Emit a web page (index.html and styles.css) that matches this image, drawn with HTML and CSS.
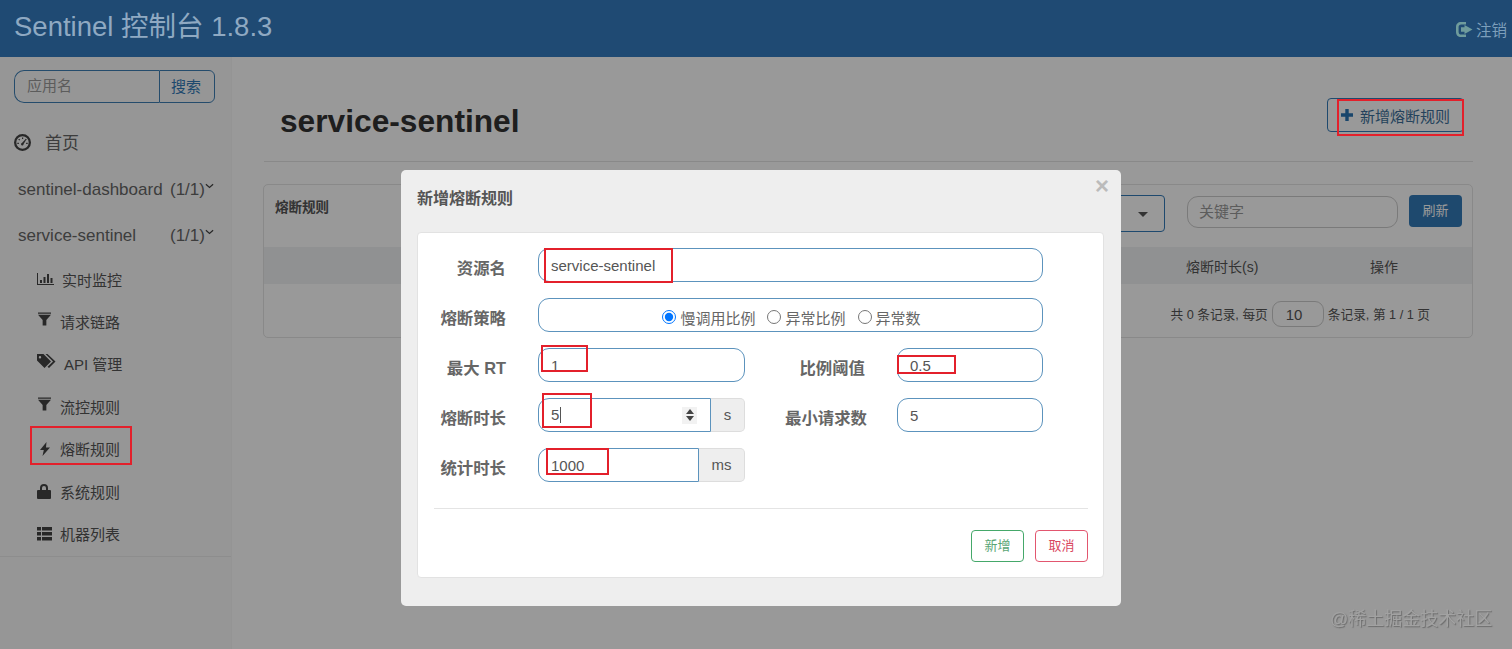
FILE: index.html
```html
<!DOCTYPE html>
<html lang="zh">
<head>
<meta charset="utf-8">
<title>Sentinel 控制台</title>
<link rel="stylesheet" href="styles.css">
</head>
<body>
<svg class="defs" width="0" height="0" aria-hidden="true">
  <symbol id="i-filter" viewBox="0 0 14 14"><path d="M0 0h14v1.4H0zM0 2.4h14L9 8v6H5V8z"/></symbol>
</svg>
<header class="topbar">
  <div class="brand">Sentinel 控制台 1.8.3</div>
  <div class="logout">
    <svg class="i-logout" viewBox="0 0 17 15"><path d="M5 0h5v2.4H5.2C3.6 2.4 2.6 3.4 2.6 5v5c0 1.600 1 2.600 2.600 2.600H10V15H5c-3 0-5-2-5-5V5c0-3 2-5 5-5z"/><path d="M8.500 5.200V3L16.500 7.500 8.500 12V9.800H5V5.200z"/></svg>
    <span>注销</span>
  </div>
</header>
<div class="layout">
  <aside class="sidebar">
    <div class="search">
      <span class="search-input">应用名</span>
      <span class="search-btn">搜索</span>
    </div>
    <div class="nav-home">
      <svg class="i-gauge" viewBox="0 0 17 17"><path fill-rule="evenodd" d="M8.500 0a8.500 8.500 0 1 1 0 17 8.500 8.500 0 0 1 0-17zm0 2.300a6.200 6.200 0 1 0 0 12.400 6.200 6.200 0 0 0 0-12.400z"/><path d="M8 3.500h1.200v1.500H8zM4.200 5.500l1-.8 1 1-.9.800zM12.800 5.500l-1-.8-1 1 .9.800zM3.300 8.800h1.600V10H3.300zM12.100 8.800h1.600V10h-1.600zM11 5.800l.8.600-2.200 3.600a1.300 1.300 0 1 1-1.700-1.100z"/></svg>
      <span>首页</span>
    </div>
    <div class="nav-app"><span class="app-name">sentinel-dashboard</span><span class="app-count">(1/1)</span><svg class="i-chev" viewBox="0 0 10 6"><path d="M1 1l4 3.500L9 1" /></svg></div>
    <div class="nav-app"><span class="app-name">service-sentinel</span><span class="app-count">(1/1)</span><svg class="i-chev" viewBox="0 0 10 6"><path d="M1 1l4 3.500L9 1" /></svg></div>
    <ul class="subnav">
      <li><svg class="ico ico-stats" viewBox="0 0 17 12"><path d="M0 0h1v11h16v1H0z"/><path d="M3 7h2v3H3zM6.500 4h2v6h-2zM10 1h2v9h-2zM13.500 5h2v5h-2z"/></svg><span class="lbl lbl-62">实时监控</span></li>
      <li><svg class="ico ico-filter"><use href="#i-filter"/></svg><span class="lbl">请求链路</span></li>
      <li><svg class="ico ico-tags" viewBox="0 0 19 15"><path d="M0 0h6.500L14 7.500 7.500 14 0 6.500zM3 2a1.200 1.200 0 1 0 0 2.400A1.200 1.200 0 0 0 3 2z" fill-rule="evenodd"/><path d="M8.500 0h2L18.500 7.500 12 14l-1.500-1.200 5.500-5.300z"/></svg><span class="lbl lbl-64">API 管理</span></li>
      <li><svg class="ico ico-filter"><use href="#i-filter"/></svg><span class="lbl">流控规则</span></li>
      <li><svg class="ico ico-flash" viewBox="0 0 10 14"><path d="M6.500 0L0 8h3.800L2.500 14 10 5.500H6z"/></svg><span class="lbl">熔断规则</span></li>
      <li><svg class="ico ico-lock" viewBox="0 0 14 15"><path fill-rule="evenodd" d="M3 6V4a4 4 0 0 1 8 0v2h2a1 1 0 0 1 1 1v7a1 1 0 0 1-1 1H1a1 1 0 0 1-1-1V7a1 1 0 0 1 1-1zm2-2v2h4V4a2 2 0 0 0-4 0z"/></svg><span class="lbl">系统规则</span></li>
      <li><svg class="ico ico-list" viewBox="0 0 15 14"><path d="M0 0h4v3.600H0zM5 0h10v3.600H5zM0 5h4v3.600H0zM5 5h10v3.600H5zM0 10h4v3.600H0zM5 10h10v3.600H5z"/></svg><span class="lbl">机器列表</span></li>
    </ul>
  </aside>
  <main class="content">
    <div class="page-head">
      <h1 class="page-title">service-sentinel</h1>
      <div class="add-btn">
        <svg class="i-plus" viewBox="0 0 12 12"><path d="M4.300 0h3.400v4.300H12v3.400H7.700V12H4.300V7.700H0V4.300h4.300z"/></svg>
        <span>新增熔断规则</span>
      </div>
    </div>
    <section class="panel">
      <div class="toolbar">
        <div class="panel-title">熔断规则</div>
        <div class="select"><i class="caret"></i></div>
        <div class="keyword">关键字</div>
        <div class="refresh">刷新</div>
      </div>
      <div class="thead"><span class="th-time">熔断时长(s)</span><span class="th-op">操作</span></div>
      <div class="pager"><span>共 0 条记录, 每页</span><span class="page-size">10</span><span>条记录, 第 1 / 1 页</span></div>
    </section>
  </main>
</div>

<div class="overlay">
  <div class="modal">
    <div class="modal-head">
      <span class="modal-title">新增熔断规则</span>
      <span class="modal-close">×</span>
    </div>
    <div class="modal-body">
      <div class="row">
        <label class="lab">资源名</label>
        <div class="field field-full">service-sentinel</div>
      </div>
      <div class="row">
        <label class="lab">熔断策略</label>
        <div class="field field-full field-radio">
          <label class="radio"><input type="radio" name="s" checked>慢调用比例</label>
          <label class="radio"><input type="radio" name="s">异常比例</label>
          <label class="radio"><input type="radio" name="s">异常数</label>
        </div>
      </div>
      <div class="row">
        <label class="lab">最大 RT</label>
        <div class="field field-half">1</div>
        <label class="lab lab2 lab2-short">比例阈值</label>
        <div class="field field-small">0.5</div>
      </div>
      <div class="row">
        <label class="lab">熔断时长</label>
        <div class="group">
          <div class="field field-grouped"><span class="caret-text">5</span>
            <span class="spin"><i class="up"></i><i class="down"></i></span>
          </div>
          <span class="addon addon-s">s</span>
        </div>
        <label class="lab lab2">最小请求数</label>
        <div class="field field-small">5</div>
      </div>
      <div class="row">
        <label class="lab">统计时长</label>
        <div class="group">
          <div class="field field-grouped">1000</div>
          <span class="addon addon-ms">ms</span>
        </div>
      </div>
      <hr class="divider">
      <div class="actions">
        <span class="btn btn-ok">新增</span>
        <span class="btn btn-cancel">取消</span>
      </div>
    </div>
  </div>
</div>

<div class="mark mark-add"></div>
<div class="mark mark-nav"></div>
<div class="mark mark-res"></div>
<div class="mark mark-rt"></div>
<div class="mark mark-ratio"></div>
<div class="mark mark-time"></div>
<div class="mark mark-stat"></div>
<div class="watermark">@稀土掘金技术社区</div>
</body>
</html>
```
FILE: styles.css
```css
* { box-sizing: border-box; }
html, body { margin: 0; height: 649px; overflow: hidden; }
body {
  font-family: "Liberation Sans", "Noto Sans CJK SC", sans-serif;
  font-size: 14px;
  color: #555;
  background: #fff;
}
.defs { position: absolute; }

/* top bar: sits above the dimming layer, in its dimmed colours */
.topbar {
  position: relative;
  z-index: 1;
  height: 57px;
  background: #1f4a73;
  display: flex;
  align-items: center;
  justify-content: space-between;
  padding: 0 5px 4px 14px;
}
.brand { font-size: 27.5px; color: #8fa9c2; line-height: 1; }
.logout { display: flex; align-items: center; gap: 3px; color: #7d9fbb; font-size: 15.5px; padding-top: 5px; }
.i-logout { width: 17px; height: 15px; fill: #6f9c9c; }

.layout { display: flex; height: 592px; }

/* sidebar */
.sidebar { width: 232px; flex: none; background: #fbfbfb; padding-top: 13px; border-right: 1px solid #f7f7f7; }
.search { display: flex; margin-left: 14px; width: 201px; height: 33px; }
.search-input {
  width: 145px; border: 1px solid #3f7fb5; border-right: 0;
  border-radius: 10px 0 0 10px; padding: 0 0 0 12px;
  line-height: 30px; color: #999; font-size: 15px;
}
.search-btn {
  width: 56px; border: 1px solid #3f7fb5; border-radius: 0 6px 6px 0;
  text-align: center; line-height: 32px; color: #337ab7; font-size: 15px; padding-right: 2px;
}
.nav-home { display: flex; align-items: center; height: 46px; margin-top: 17px; padding-left: 14px; font-size: 17px; color: #666; }
.nav-home span { margin: -4px 0 0 14px; }
.i-gauge { width: 17px; height: 17px; fill: #444; margin-top: -2px; }
.nav-app { display: flex; align-items: center; height: 46px; padding: 1px 0 0 18px; font-size: 17px; color: #666; }
.app-name { width: 152px; }
.app-count { width: 35px; }
.i-chev { width: 9px; height: 6px; fill: none; stroke: #444; stroke-width: 1.4; margin-top: -8px; }
.subnav { list-style: none; margin: 0; padding: 0 0 1px 37px; border-bottom: 1px solid #ececec; width: 231px; }
.subnav li { display: flex; align-items: center; height: 42.4px; font-size: 15px; color: #555; }
.ico { fill: #444; flex: none; }
.lbl { margin-left: 9px; }
.ico-stats { width: 17px; height: 12px; }
.lbl-62 { margin-left: 8px; }
.ico-filter { width: 13px; height: 14px; margin: -5px 1px 0 1px; }
.ico-filter + .lbl { margin-left: 8px; }
.ico-tags { width: 19px; height: 15px; margin-top: -4px; }
.lbl-64 { margin-left: 8px; }
.ico-flash { width: 10px; height: 14px; margin-left: 3px; }
.ico-flash + .lbl { margin-left: 10px; }
.ico-lock { width: 14px; height: 15px; }
.ico-lock + .lbl { margin-left: 9px; }
.ico-list { width: 15px; height: 14px; }
.ico-list + .lbl { margin-left: 8px; }

/* main */
.content { flex: 1; min-width: 0; padding: 41px 39px 0 32px; }
.page-head {
  height: 64px; border-bottom: 1px solid #e4e4e4;
  display: flex; justify-content: space-between; align-items: flex-start;
  padding: 0 9px 0 16px;
}
.page-title { margin: 4px 0 0; font-size: 31.7px; line-height: 38px; font-weight: 700; color: #333; }
.add-btn {
  width: 137px; height: 34px; border: 1px solid #337ab7; border-radius: 4px;
  display: flex; align-items: center; padding-left: 13px; gap: 7px; color: #337ab7; font-size: 15px;
}
.add-btn span { color: #3d6f9a; }
.i-plus { width: 12px; height: 12px; fill: #2a75b5; }
.panel { margin: 22px 0 0 -1px; height: 154px; border: 1px solid #e4e4e4; border-radius: 5px; }
.toolbar { height: 62px; display: flex; align-items: flex-start; padding: 10px 10px 0 11px; }
.panel-title { font-size: 13.5px; font-weight: 700; color: #555; margin: 1px auto 0 0; }
.select { width: 165px; height: 37px; border: 1px solid #337ab7; border-radius: 4px; position: relative; }
.caret {
  position: absolute; right: 16px; top: 16px; width: 0; height: 0;
  border: 5px solid transparent; border-top: 5px solid #555; border-bottom: 0;
}
.keyword {
  width: 211px; height: 32px; margin: 1px 11px 0 22px; border: 1px solid #ccc;
  border-radius: 11px; padding-left: 11px; line-height: 30px; color: #999; font-size: 15px;
}
.refresh {
  width: 53px; height: 32px; background: #337ab7; color: #fff; border-radius: 4px;
  text-align: center; line-height: 32px; font-size: 13px;
}
.thead { height: 37px; background: #f0f2f3; display: flex; align-items: center; font-size: 14px; color: #555; }
.th-time { margin-left: 922px; width: 184px; }
.pager { display: flex; align-items: center; justify-content: flex-end; height: 53px; padding: 6px 42px 0 0; font-size: 12.7px; color: #555; }
.page-size {
  width: 52px; height: 26px; margin: 0 4px; border: 1px solid #ccc; border-radius: 9px;
  padding-left: 13px; line-height: 25px; font-size: 15px;
}

/* modal */
.overlay { position: fixed; inset: 0; background: rgba(0, 0, 0, .4); }
.modal {
  margin: 170px 0 0 401px; width: 720px; height: 436px;
  background: #eee; border-radius: 5px; padding: 0 17px 28px 16px;
  display: flex; flex-direction: column;
}
.modal-head { height: 62px; display: flex; justify-content: space-between; align-items: flex-start; flex: none; }
.modal-title { font-size: 16px; font-weight: 700; color: #555; margin-top: 15px; }
.modal-close { font-size: 24px; line-height: 24px; font-weight: 700; color: #bbb; margin: 4px -5px 0 0; }
.modal-body {
  flex: 1; background: #fff; border: 1px solid #e2e2e2; border-radius: 4px;
  padding: 15px 15px 0 16px;
}
.row { display: flex; align-items: center; height: 34px; margin-bottom: 16px; }
.lab { width: 72px; padding-top: 4px; text-align: right; font-size: 16.4px; font-weight: 700; color: #666; margin-right: 32px; flex: none; white-space: nowrap; }
.lab2 { width: 122px; margin-right: 30px; }
.lab2-short { padding-right: 2px; }
.field {
  height: 34px; border: 1px solid #5c93bd; border-radius: 11px;
  padding: 0 12px; line-height: 33px; color: #555; font-size: 15px; background: #fff; flex: none;
}
.field-full { width: 505px; }
.field-half { width: 207px; }
.field-small { width: 146px; }
.field-radio { display: flex; justify-content: center; align-items: center; gap: 12px; padding: 8px 0 0 2px; font-size: 15px; color: #666; line-height: 20px; }
.radio { display: flex; align-items: center; }
.radio input { margin: -4px 4px 0 0; width: 14px; height: 14px; }
.group { display: flex; width: 207px; flex: none; }
.field-grouped { flex: 1; min-width: 0; border-radius: 11px 0 0 11px; display: flex; justify-content: space-between; align-items: center; }
.caret-text { border-right: 1px solid #555; padding-right: 1px; line-height: 16px; }
.spin { display: flex; flex-direction: column; gap: 2px; align-items: center; justify-content: center; width: 15px; height: 17px; background: #f2f2f2; margin-right: 1px; }
.spin i { width: 0; height: 0; border: 4px solid transparent; }
.spin .up { border-bottom: 5px solid #444; border-top: 0; }
.spin .down { border-top: 5px solid #444; border-bottom: 0; }
.addon { background: #eee; border: 1px solid #ddd; border-left: 0; border-radius: 0 5px 5px 0; text-align: center; line-height: 31px; color: #555; flex: none; font-size: 15px; }
.addon-s { width: 34px; }
.addon-ms { width: 46px; }
.divider { border: 0; border-top: 1px solid #e4e4e4; margin: 26px 0 0; }
.actions { display: flex; justify-content: flex-end; gap: 11px; margin-top: 21px; }
.btn { width: 53px; height: 32px; border-radius: 4px; border: 1px solid; text-align: center; line-height: 30px; font-size: 13px; background: #fff; }
.btn-ok { border-color: #45a86a; color: #5aa574; }
.btn-cancel { border-color: #e2566f; color: #d9475f; }

/* annotations drawn on the screenshot */
.mark { position: absolute; border: 2px solid #e3202b; }
.mark-add { left: 1337px; top: 99px; width: 127px; height: 37px; }
.mark-nav { left: 30px; top: 426px; width: 102px; height: 39px; }
.mark-res { left: 544px; top: 248px; width: 129px; height: 35px; }
.mark-rt { left: 541px; top: 345px; width: 47px; height: 27px; }
.mark-ratio { left: 897px; top: 355px; width: 59px; height: 19px; }
.mark-time { left: 542px; top: 393px; width: 50px; height: 35px; }
.mark-stat { left: 546px; top: 448px; width: 63px; height: 27px; }
.watermark {
  position: absolute; left: 1330px; top: 606px; font-size: 18px; line-height: 26px;
  color: #a2a2a2; text-shadow: 1px 1px 1px #6c6c6c; white-space: nowrap;
}
```
